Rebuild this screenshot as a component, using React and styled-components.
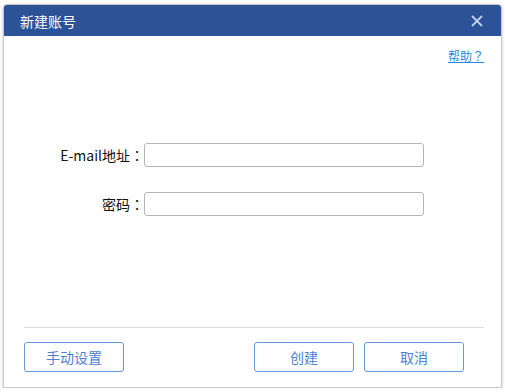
import React from "react";
import styled, { createGlobalStyle } from "styled-components";

const GlobalStyle = createGlobalStyle`
  body {
    margin: 0;
    background: #ffffff;
    font-family: "Microsoft YaHei", "Noto Sans CJK SC", "Noto Sans", sans-serif;
  }
`;

const Dialog = styled.div`
  box-sizing: border-box;
  margin: 4px 0 0 3px;
  width: 499px;
  height: 384px;
  border: 1px solid #c9c9c9;
  border-radius: 4px 4px 0 0;
  box-shadow: 0 1px 3px rgba(0, 0, 0, 0.25);
  display: flex;
  flex-direction: column;
  background: #fff;
`;

const Header = styled.div`
  height: 31px;
  background: #2c5298;
  border-radius: 3px 3px 0 0;
  display: flex;
  align-items: center;
  justify-content: space-between;
  padding: 0 18px 0 16px;
  color: #fff;
`;

const Title = styled.span`
  font-size: 14px;
`;

const Close = styled.button`
  border: 0;
  background: none;
  padding: 0;
  display: flex;
  color: #c3cfe6;
  cursor: pointer;
`;

const Body = styled.div`
  flex: 1;
  display: flex;
  flex-direction: column;
  padding: 11px 17px 0 20px;
`;

const HelpRow = styled.div`
  display: flex;
  justify-content: flex-end;
`;

const Help = styled.a`
  font-size: 12px;
  color: #2a8ae0;
  text-decoration: underline;
  cursor: pointer;
`;

// full-width punctuation set centred, as the dialog's UI font does
const Punct = styled.span`
  font-family: "Noto Sans CJK TC", "Noto Sans CJK SC", sans-serif;
`;

const Form = styled.div`
  margin-top: 79px;
  display: flex;
  flex-direction: column;
  gap: 25px;
`;

const Row = styled.div`
  display: flex;
  align-items: center;
`;

const Label = styled.label`
  width: 120px;
  text-align: right;
  font-size: 14px;
  color: #111;
  white-space: nowrap;
`;

const Input = styled.input`
  box-sizing: border-box;
  width: 280px;
  height: 24px;
  border: 1px solid #b5b5b5;
  border-radius: 3px;
  outline: none;
`;

const Footer = styled.div`
  margin: 0 17px 0 20px;
  border-top: 1px solid #dcdcdc;
  padding: 14px 0 15px;
  display: flex;
  align-items: center;
`;

const Button = styled.button`
  box-sizing: border-box;
  width: 100px;
  height: 30px;
  border: 1px solid #6a96e0;
  border-radius: 3px;
  background: #fff;
  color: #4c7fd6;
  font-family: inherit;
  font-size: 14px;
  margin-left: ${(p) => p.$gap || 0}px;
`;

export default function App() {
  return (
    <>
      <GlobalStyle />
      <Dialog>
        <Header>
          <Title>新建账号</Title>
          <Close>
            <svg width="12" height="12" viewBox="0 0 12 12">
              <path d="M1 1L11 11M11 1L1 11" stroke="currentColor" strokeWidth="1.8" />
            </svg>
          </Close>
        </Header>
        <Body>
          <HelpRow>
            <Help>帮助<Punct>？</Punct></Help>
          </HelpRow>
          <Form>
            <Row>
              <Label>E-mail地址<Punct>：</Punct></Label>
              <Input />
            </Row>
            <Row>
              <Label>密码<Punct>：</Punct></Label>
              <Input type="password" />
            </Row>
          </Form>
        </Body>
        <Footer>
          <Button>手动设置</Button>
          <Button $gap={130}>创建</Button>
          <Button $gap={10}>取消</Button>
        </Footer>
      </Dialog>
    </>
  );
}
